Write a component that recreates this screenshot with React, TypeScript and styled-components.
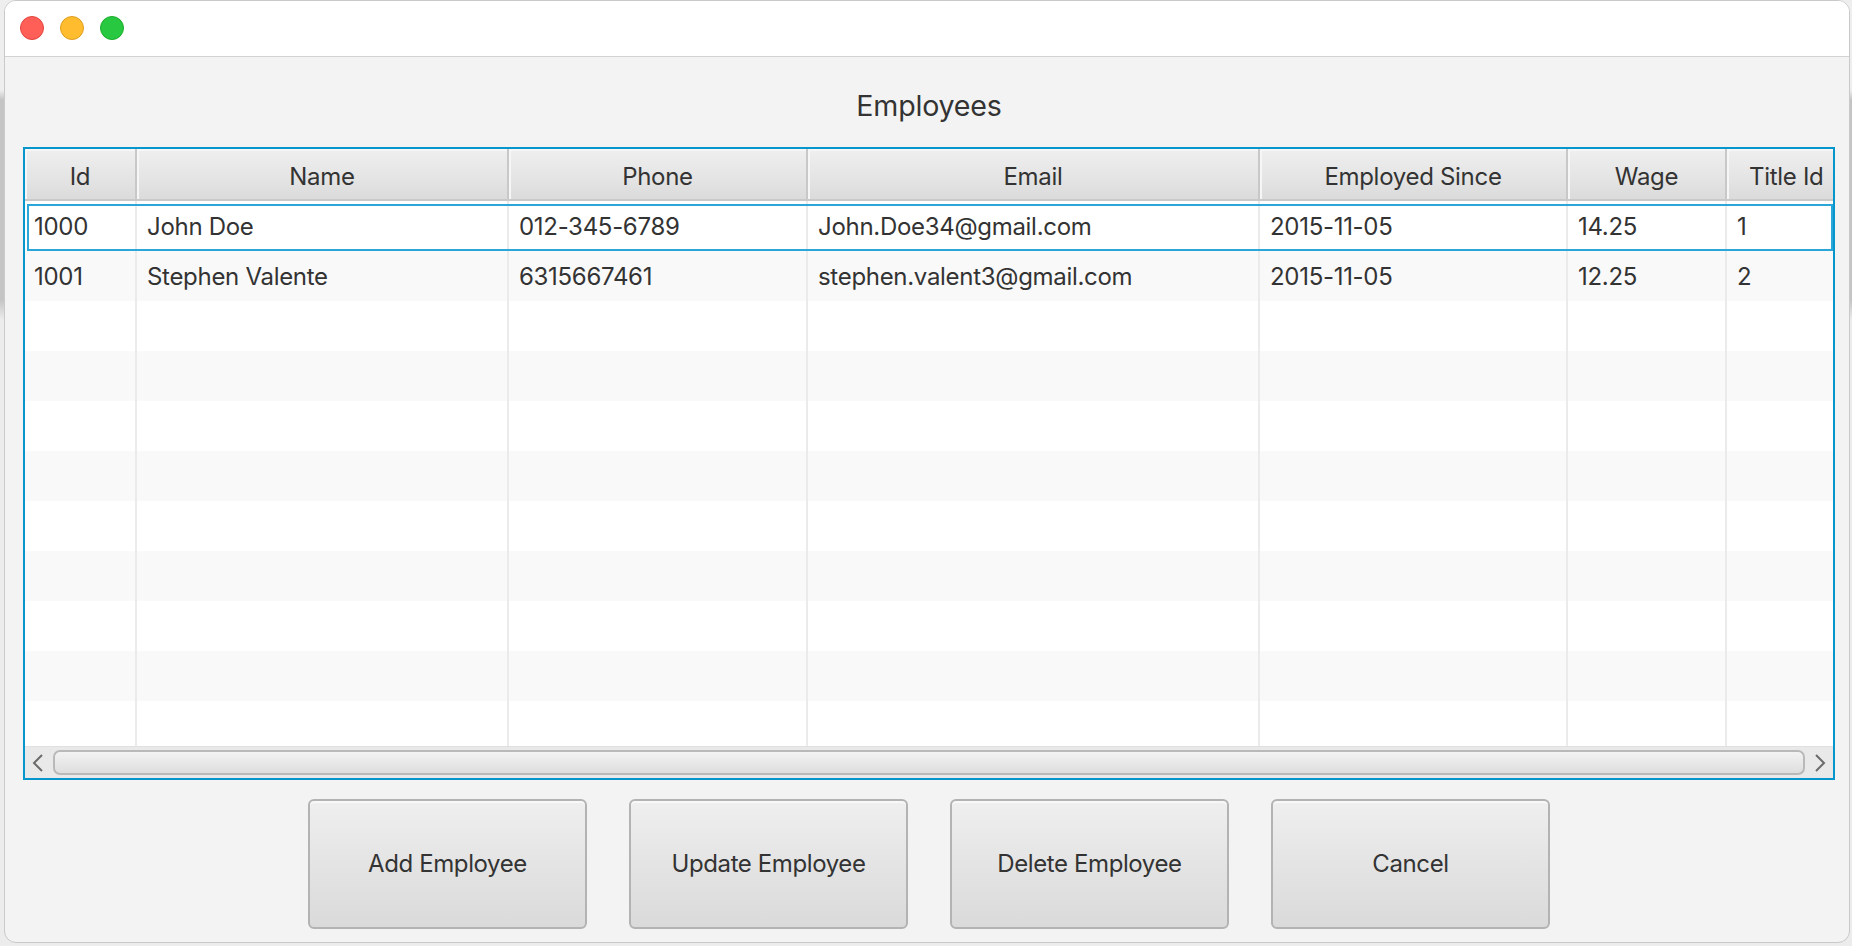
import React from "react";
import styled, { createGlobalStyle } from "styled-components";

const Global = createGlobalStyle`
  html, body { margin: 0; padding: 0; }
  body {
    width: 1852px;
    height: 946px;
    overflow: hidden;
    background: #dcdcdc;
    font-family: Inter, "Noto Sans", "Liberation Sans", sans-serif;
    color: #333;
  }
`;

const Desktop = styled.div`
  width: 1852px;
  height: 946px;
  display: flex;
  padding: 0 2px 3px 4px;
  box-sizing: border-box;
  background: linear-gradient(180deg, #eeeeee 0px, #eeeeee 90px, #c4c4c4 100px, #c4c4c4 300px, #ececec 320px);
`;

const Window = styled.div`
  flex: 1;
  display: flex;
  flex-direction: column;
  background: #f3f3f3;
  border: 1px solid #c9c9c9;
  border-radius: 12px;
  overflow: hidden;
`;

const TitleBar = styled.div`
  height: 55px;
  flex: none;
  background: #ffffff;
  border-bottom: 1px solid #d3d3d3;
  display: flex;
  align-items: center;
  gap: 16px;
  padding-left: 15px;
`;

const Light = styled.span<{ $fill: string; $edge: string }>`
  width: 24px;
  height: 24px;
  margin-top: -2px;
  border-radius: 50%;
  box-sizing: border-box;
  background: ${(p) => p.$fill};
  border: 1px solid ${(p) => p.$edge};
`;

const Content = styled.div`
  flex: 1;
  display: flex;
  flex-direction: column;
  padding: 0 14px 0 18px;
`;

const Heading = styled.h1`
  margin: 0;
  height: 90px;
  padding-top: 6px;
  box-sizing: border-box;
  display: flex;
  align-items: center;
  justify-content: center;
  font-size: 28.6px;
  font-weight: 400;
  color: #333;
  letter-spacing: -0.2px;
`;

const Table = styled.div`
  height: 633px;
  box-sizing: border-box;
  border: 2px solid #0796cb;
  background: #ffffff;
  display: flex;
  flex-direction: column;
  overflow: hidden;
`;

const cols = "112px 372px 299px 452px 308px 159px 106px";

const HeaderRow = styled.div`
  display: grid;
  grid-template-columns: ${cols};
  height: 52px;
  flex: none;
  box-sizing: border-box;
  border-bottom: 2px solid #c9c9c9;
`;

const HeaderCell = styled.div`
  display: flex;
  align-items: center;
  justify-content: center;
  padding-top: 4px;
  box-sizing: border-box;
  white-space: nowrap;
  overflow: hidden;
  font-size: 24px;
  color: #333;
  letter-spacing: -0.3px;
  background: linear-gradient(180deg, #efefef 0%, #e4e4e4 60%, #dbdbdb 100%);
  border-right: 2px solid #c8c8c8;
  box-shadow: inset 2px 2px 0 #f6f6f6;
  &:last-child { border-right: none; justify-content: flex-start; padding-left: 22px; }
`;

const Body = styled.div`
  flex: 1;
  overflow: hidden;
`;

const Row = styled.div<{ $odd: boolean; $focused?: boolean }>`
  position: relative;
  display: grid;
  grid-template-columns: ${cols};
  height: 50px;
  background: ${(p) => (p.$odd ? "#f9f9f9" : "#ffffff")};
  ${(p) =>
    p.$focused &&
    `
    &::after {
      content: "";
      position: absolute;
      top: 3px; left: 2px; right: 0; bottom: 0;
      border: 2px solid #2aa6d8;
      pointer-events: none;
    }
  `}
`;

const Cell = styled.div`
  display: flex;
  align-items: center;
  padding-left: 10px;
  padding-top: 1px;
  font-size: 24px;
  color: #333;
  letter-spacing: -0.3px;
  white-space: nowrap;
  overflow: hidden;
  border-right: 2px solid #ebebeb;
  &:first-child { padding-left: 9px; }
  &:last-child { border-right: none; }
`;

const ScrollBar = styled.div`
  height: 31px;
  flex: none;
  background: #e9e9e9;
  display: flex;
  align-items: center;
  padding: 0 6px 0 6px;
  gap: 8px;
  border-top: 1px solid #e0e0e0;
`;

const Arrow = styled.svg`
  width: 14px;
  height: 20px;
  flex: none;
`;

const Thumb = styled.div`
  flex: 1;
  height: 25px;
  box-sizing: border-box;
  border: 2px solid #b9b9b9;
  border-radius: 7px;
  background: linear-gradient(180deg, #f3f3f3 0%, #e6e6e6 60%, #dedede 100%);
`;

const ButtonBar = styled.div`
  display: flex;
  justify-content: center;
  gap: 42px;
  padding-top: 19px;
`;

const Button = styled.button`
  width: 279px;
  height: 130px;
  box-sizing: border-box;
  border: 2px solid #b3b3b3;
  border-radius: 6px;
  background: linear-gradient(180deg, #efefef 0%, #e4e4e4 50%, #dadada 100%);
  box-shadow: inset 0 2px 0 #f8f8f8;
  font-family: inherit;
  font-size: 24px;
  color: #333;
  letter-spacing: -0.4px;
  padding-bottom: 2px;
  cursor: pointer;
`;

const headers = ["Id", "Name", "Phone", "Email", "Employed Since", "Wage", "Title Id"];

const employees = [
  ["1000", "John Doe", "012-345-6789", "John.Doe34@gmail.com", "2015-11-05", "14.25", "1"],
  ["1001", "Stephen Valente", "6315667461", "stephen.valent3@gmail.com", "2015-11-05", "12.25", "2"],
];

const rowCount = 11;

export default function App() {
  const rows = Array.from({ length: rowCount }, (_, i) => employees[i] ?? Array(7).fill(""));
  return (
    <>
      <Global />
      <Desktop>
        <Window>
          <TitleBar>
            <Light $fill="#ff5f57" $edge="#e2463f" />
            <Light $fill="#febc2e" $edge="#df9f22" />
            <Light $fill="#28c840" $edge="#1dad2f" />
          </TitleBar>
          <Content>
            <Heading>Employees</Heading>
            <Table>
              <HeaderRow>
                {headers.map((h) => (
                  <HeaderCell key={h}>{h}</HeaderCell>
                ))}
              </HeaderRow>
              <Body>
                {rows.map((r, i) => (
                  <Row key={i} $odd={i % 2 === 1} $focused={i === 0}>
                    {r.map((c: string, j: number) => (
                      <Cell key={j}>{c}</Cell>
                    ))}
                  </Row>
                ))}
              </Body>
              <ScrollBar>
                <Arrow viewBox="0 0 14 20">
                  <path d="M11 2 L3 10 L11 18" fill="none" stroke="#6b6b6b" strokeWidth="2" />
                </Arrow>
                <Thumb />
                <Arrow viewBox="0 0 14 20">
                  <path d="M3 2 L11 10 L3 18" fill="none" stroke="#6b6b6b" strokeWidth="2" />
                </Arrow>
              </ScrollBar>
            </Table>
            <ButtonBar>
              <Button>Add Employee</Button>
              <Button>Update Employee</Button>
              <Button>Delete Employee</Button>
              <Button>Cancel</Button>
            </ButtonBar>
          </Content>
        </Window>
      </Desktop>
    </>
  );
}
